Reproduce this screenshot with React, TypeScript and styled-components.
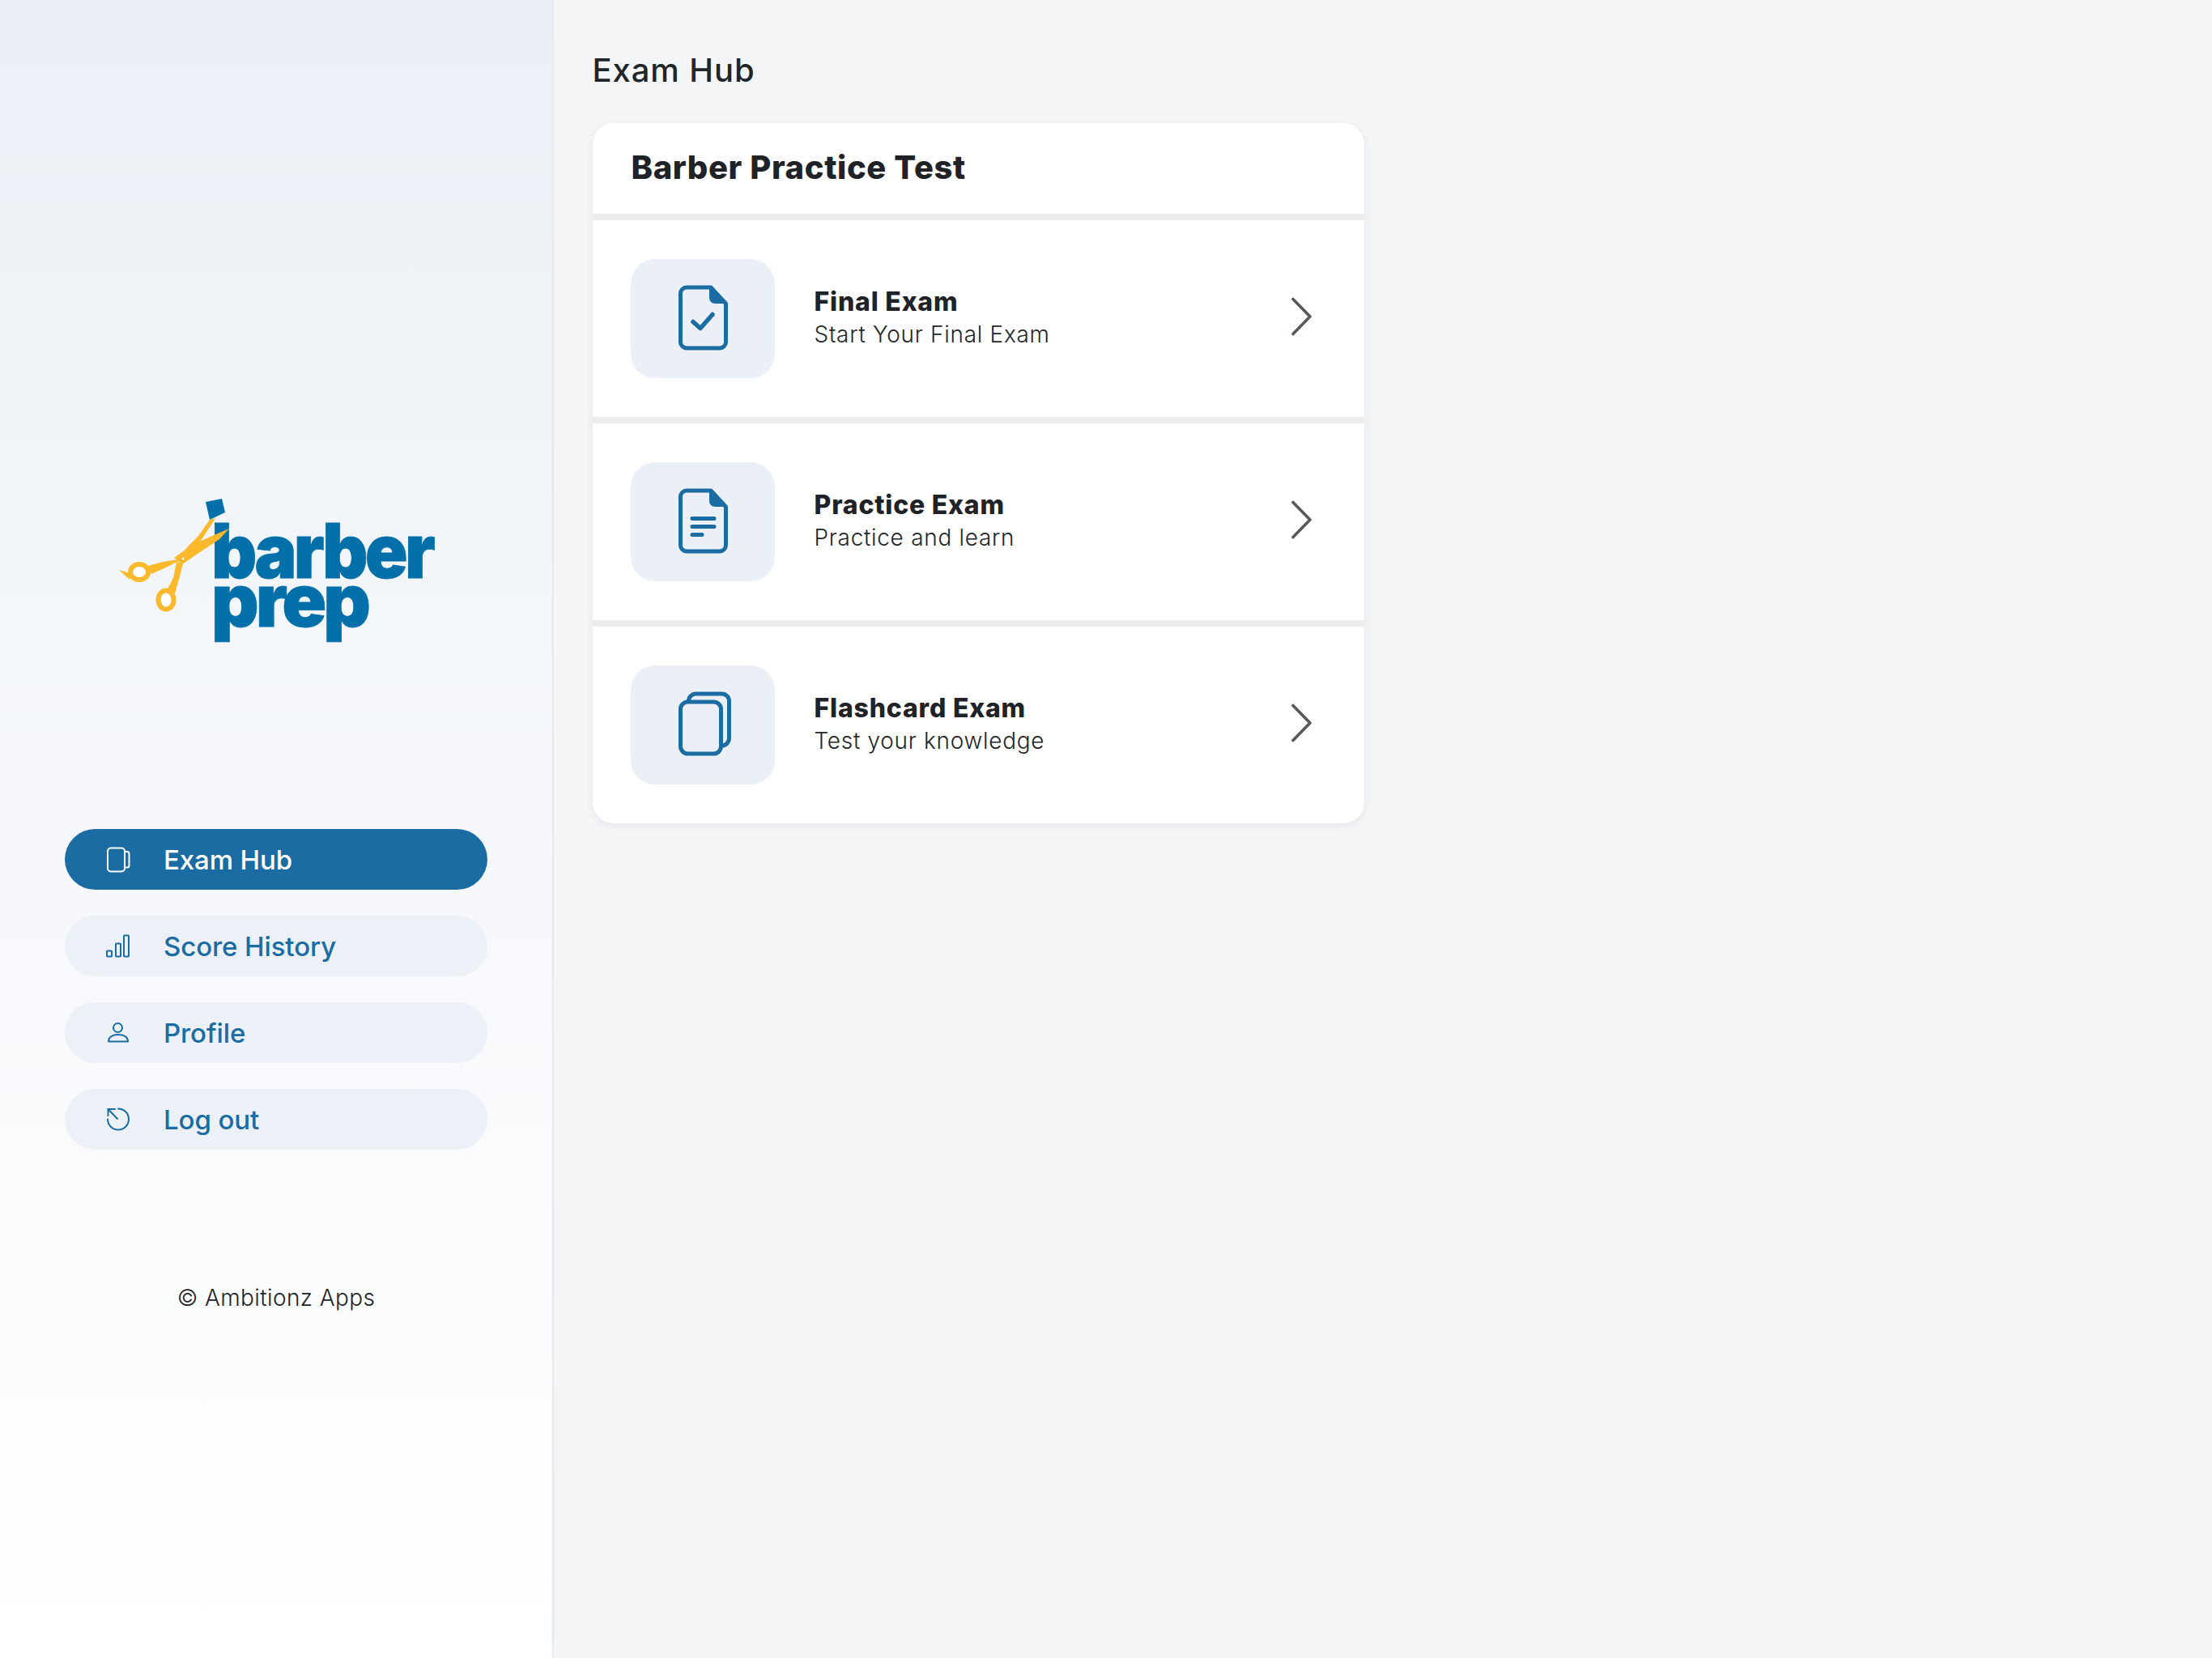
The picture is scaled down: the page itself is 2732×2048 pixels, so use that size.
import styled, { createGlobalStyle } from "styled-components";

const GlobalStyle = createGlobalStyle`
  html, body {
    margin: 0;
    padding: 0;
    background: #f4f5f7;
  }
  * {
    box-sizing: border-box;
  }
  body {
    font-family: "Inter", "Noto Sans", sans-serif;
  }
`;

const Page = styled.div`
  display: flex;
  width: 2732px;
  height: 2048px;
  overflow: hidden;
`;

const Sidebar = styled.aside`
  position: relative;
  width: 682px;
  flex-shrink: 0;
  display: flex;
  flex-direction: column;
  align-items: center;
  padding-top: 590px;
  background: linear-gradient(180deg, #ebf0f6 0%, #ffffff 100%);
  box-shadow: 1px 0 2px rgba(40, 50, 70, 0.12);
`;

const LogoSvg = styled.svg`
  display: block;
  width: 440px;
  height: 220px;
  margin-right: 1px;
  overflow: visible;
  filter: blur(0.5px);

  text {
    font-family: "Inter", sans-serif;
    font-weight: 900;
    fill: #0470aa;
    stroke: #0470aa;
    stroke-width: 0.8;
  }
`;

const Nav = styled.nav`
  display: flex;
  flex-direction: column;
  gap: 32px;
  width: 522px;
  margin-top: 214px;
`;

const NavItem = styled.a<{ $active?: boolean }>`
  display: flex;
  align-items: center;
  gap: 40px;
  height: 75px;
  padding-left: 50px;
  border-radius: 38px;
  font-size: 33px;
  font-weight: 500;
  letter-spacing: -0.1px;
  background: ${(p) => (p.$active ? "#1b6ca3" : "#ecf1f7")};
  color: ${(p) => (p.$active ? "#ffffff" : "#1b6ca3")};
`;

const NavIcon = styled.svg`
  display: block;
  width: 32px;
  height: 36px;
  flex-shrink: 0;
  fill: none;
  stroke: currentColor;
  stroke-width: 2;
  stroke-linecap: round;
  stroke-linejoin: round;
`;

const Copyright = styled.p`
  margin: 165px 0 0;
  font-size: 28px;
  line-height: 36px;
  font-weight: 300;
  letter-spacing: 0.4px;
  color: #1f2328;
`;

const Main = styled.main`
  flex: 1;
  padding: 57px 0 0 49.5px;
`;

const PageTitle = styled.h1`
  margin: 0 0 35px;
  font-size: 40px;
  line-height: 60px;
  font-weight: 500;
  letter-spacing: 0.9px;
  color: #20252a;
`;

const Card = styled.section`
  display: flex;
  flex-direction: column;
  gap: 8px;
  width: 953.5px;
  border-radius: 26px;
  overflow: hidden;
  background: #ebecee;
  box-shadow: 0 3px 10px rgba(30, 40, 60, 0.07);
`;

const CardHeader = styled.h2`
  display: flex;
  align-items: center;
  height: 112px;
  margin: 0;
  padding: 0 0 3px 48px;
  background: #ffffff;
  font-size: 40px;
  font-weight: 800;
  letter-spacing: 0.6px;
  color: #1f2328;
`;

const Row = styled.div`
  display: flex;
  align-items: center;
  height: 243px;
  padding: 0 64px 0 47.5px;
  background: #ffffff;
`;

const IconBox = styled.div`
  display: flex;
  align-items: center;
  justify-content: center;
  width: 178px;
  height: 147px;
  border-radius: 30px;
  background: #ebf0f6;
  color: #1b6ca3;
`;

const ExamIcon = styled.svg`
  display: block;
  width: 70px;
  height: 90px;
  fill: none;
  stroke: currentColor;
  stroke-width: 5;
  stroke-linecap: round;
  stroke-linejoin: round;
`;

const RowText = styled.div`
  display: flex;
  flex-direction: column;
  margin-left: 48.5px;
  margin-bottom: 2px;
`;

const RowTitle = styled.div`
  font-size: 32px;
  line-height: 40px;
  font-weight: 800;
  letter-spacing: 0.8px;
  color: #1f2328;
`;

const RowSub = styled.div`
  font-size: 28px;
  line-height: 40px;
  font-weight: 300;
  letter-spacing: 0.7px;
  color: #22262b;
`;

const Chevron = styled.svg`
  display: block;
  width: 26px;
  height: 48px;
  margin: 0 0 5px auto;
  fill: none;
  stroke: #55585c;
  stroke-width: 3.6;
  stroke-linecap: round;
  stroke-linejoin: round;
`;

function Logo() {
  return (
    <LogoSvg viewBox="0 0 440 220">
      <text x="140" y="124" fontSize="93" letterSpacing="-4" textLength="273" lengthAdjust="spacingAndGlyphs">
        barber
      </text>
      <text x="140" y="184" fontSize="90" letterSpacing="-4" textLength="193" lengthAdjust="spacingAndGlyphs">
        prep
      </text>
      <polygon points="133,30 153,26 157,43 138,52" fill="#0470aa" />
      <g fill="#fcb92c">
        <polygon points="145,50 138,52 124,72 112,84 100,98 107,102 122,86" />
        <polygon points="162,63 136,74 112,86 94,99 104,107 126,92 150,76" />
        <path d="M106 100 L80 104 L62 109 L66 119 L84 111 Z" />
        <path d="M97 104 L105 106 L101 122 L95 143 L85 139 L93 124 Z" />
        <path d="M26 114 L36 117 L42 124 L38 125 Z" />
      </g>
      <ellipse cx="51" cy="116.5" rx="11" ry="9.5" fill="#ffffff" stroke="#fcb92c" strokeWidth="6" />
      <ellipse cx="84" cy="151" rx="9.5" ry="11.5" fill="#ffffff" stroke="#fcb92c" strokeWidth="6" />
      <circle cx="105" cy="100" r="1.5" fill="#ffffff" />
    </LogoSvg>
  );
}

function BookIcon() {
  return (
    <NavIcon viewBox="0 0 32 36">
      <rect x="3" y="3.5" width="21" height="29" rx="4" />
      <path d="M24 8h3a2.5 2.5 0 0 1 2.5 2.5V25a2.5 2.5 0 0 1-2.5 2.5h-3" />
    </NavIcon>
  );
}

function ChartIcon() {
  return (
    <NavIcon viewBox="0 0 32 36">
      <rect x="2" y="23.5" width="6" height="7" rx="0.8" />
      <rect x="13" y="14.5" width="6" height="16" rx="0.8" />
      <rect x="23" y="4.5" width="6" height="26" rx="0.8" />
    </NavIcon>
  );
}

function UserIcon() {
  return (
    <NavIcon viewBox="0 0 32 36">
      <circle cx="15.5" cy="11.5" r="5.5" />
      <path d="M4 28.5C4 23 9 20 16 20s12 3 12 8.5z" />
    </NavIcon>
  );
}

function LogoutIcon() {
  return (
    <NavIcon viewBox="0 0 32 36">
      <path d="M16 4.5A13 13 0 1 1 3 17.5" />
      <path d="M15 17L3.5 5" />
      <path d="M3.5 13V5H12" />
    </NavIcon>
  );
}

function FinalIcon() {
  return (
    <ExamIcon viewBox="0 0 70 90">
      <path d="M45 6H15a7.5 7.5 0 0 0-7.5 7.5V73.5A7.5 7.5 0 0 0 15 81H56a7.5 7.5 0 0 0 7.5-7.5V26z" />
      <path d="M43 5V19a7 7 0 0 0 7 7H65L45 5z" fill="currentColor" stroke="none" />
      <path d="M23 48.5L32 56.5L47 39.5" strokeWidth="5.5" />
    </ExamIcon>
  );
}

function PracticeIcon() {
  return (
    <ExamIcon viewBox="0 0 70 90">
      <path d="M45 6H15a7.5 7.5 0 0 0-7.5 7.5V73.5A7.5 7.5 0 0 0 15 81H56a7.5 7.5 0 0 0 7.5-7.5V26z" />
      <path d="M43 5V19a7 7 0 0 0 7 7H65L45 5z" fill="currentColor" stroke="none" />
      <path d="M22 40.5H49M22 50.5H49M22 60.5H34" />
    </ExamIcon>
  );
}

function FlashIcon() {
  return (
    <ExamIcon viewBox="0 0 70 90">
      <rect x="7.5" y="16" width="50" height="64" rx="9" />
      <path d="M17.5 15a9 9 0 0 1 9-9H58.5a9 9 0 0 1 9 9V61a9 9 0 0 1-9 9" />
    </ExamIcon>
  );
}

function ChevronIcon() {
  return (
    <Chevron viewBox="0 0 26 48">
      <path d="M2 2.5L23 24L2 45.5" />
    </Chevron>
  );
}

const navItems = [
  { label: "Exam Hub", icon: <BookIcon />, active: true },
  { label: "Score History", icon: <ChartIcon /> },
  { label: "Profile", icon: <UserIcon /> },
  { label: "Log out", icon: <LogoutIcon /> },
];

const exams = [
  { title: "Final Exam", sub: "Start Your Final Exam", icon: <FinalIcon /> },
  { title: "Practice Exam", sub: "Practice and learn", icon: <PracticeIcon /> },
  { title: "Flashcard Exam", sub: "Test your knowledge", icon: <FlashIcon /> },
];

export default function App() {
  return (
    <Page>
      <GlobalStyle />
      <Sidebar>
        <Logo />
        <Nav>
          {navItems.map((item) => (
            <NavItem key={item.label} $active={item.active}>
              {item.icon}
              {item.label}
            </NavItem>
          ))}
        </Nav>
        <Copyright>© Ambitionz Apps</Copyright>
      </Sidebar>
      <Main>
        <PageTitle>Exam Hub</PageTitle>
        <Card>
          <CardHeader>Barber Practice Test</CardHeader>
          {exams.map((exam) => (
            <Row key={exam.title}>
              <IconBox>{exam.icon}</IconBox>
              <RowText>
                <RowTitle>{exam.title}</RowTitle>
                <RowSub>{exam.sub}</RowSub>
              </RowText>
              <ChevronIcon />
            </Row>
          ))}
        </Card>
      </Main>
    </Page>
  );
}
